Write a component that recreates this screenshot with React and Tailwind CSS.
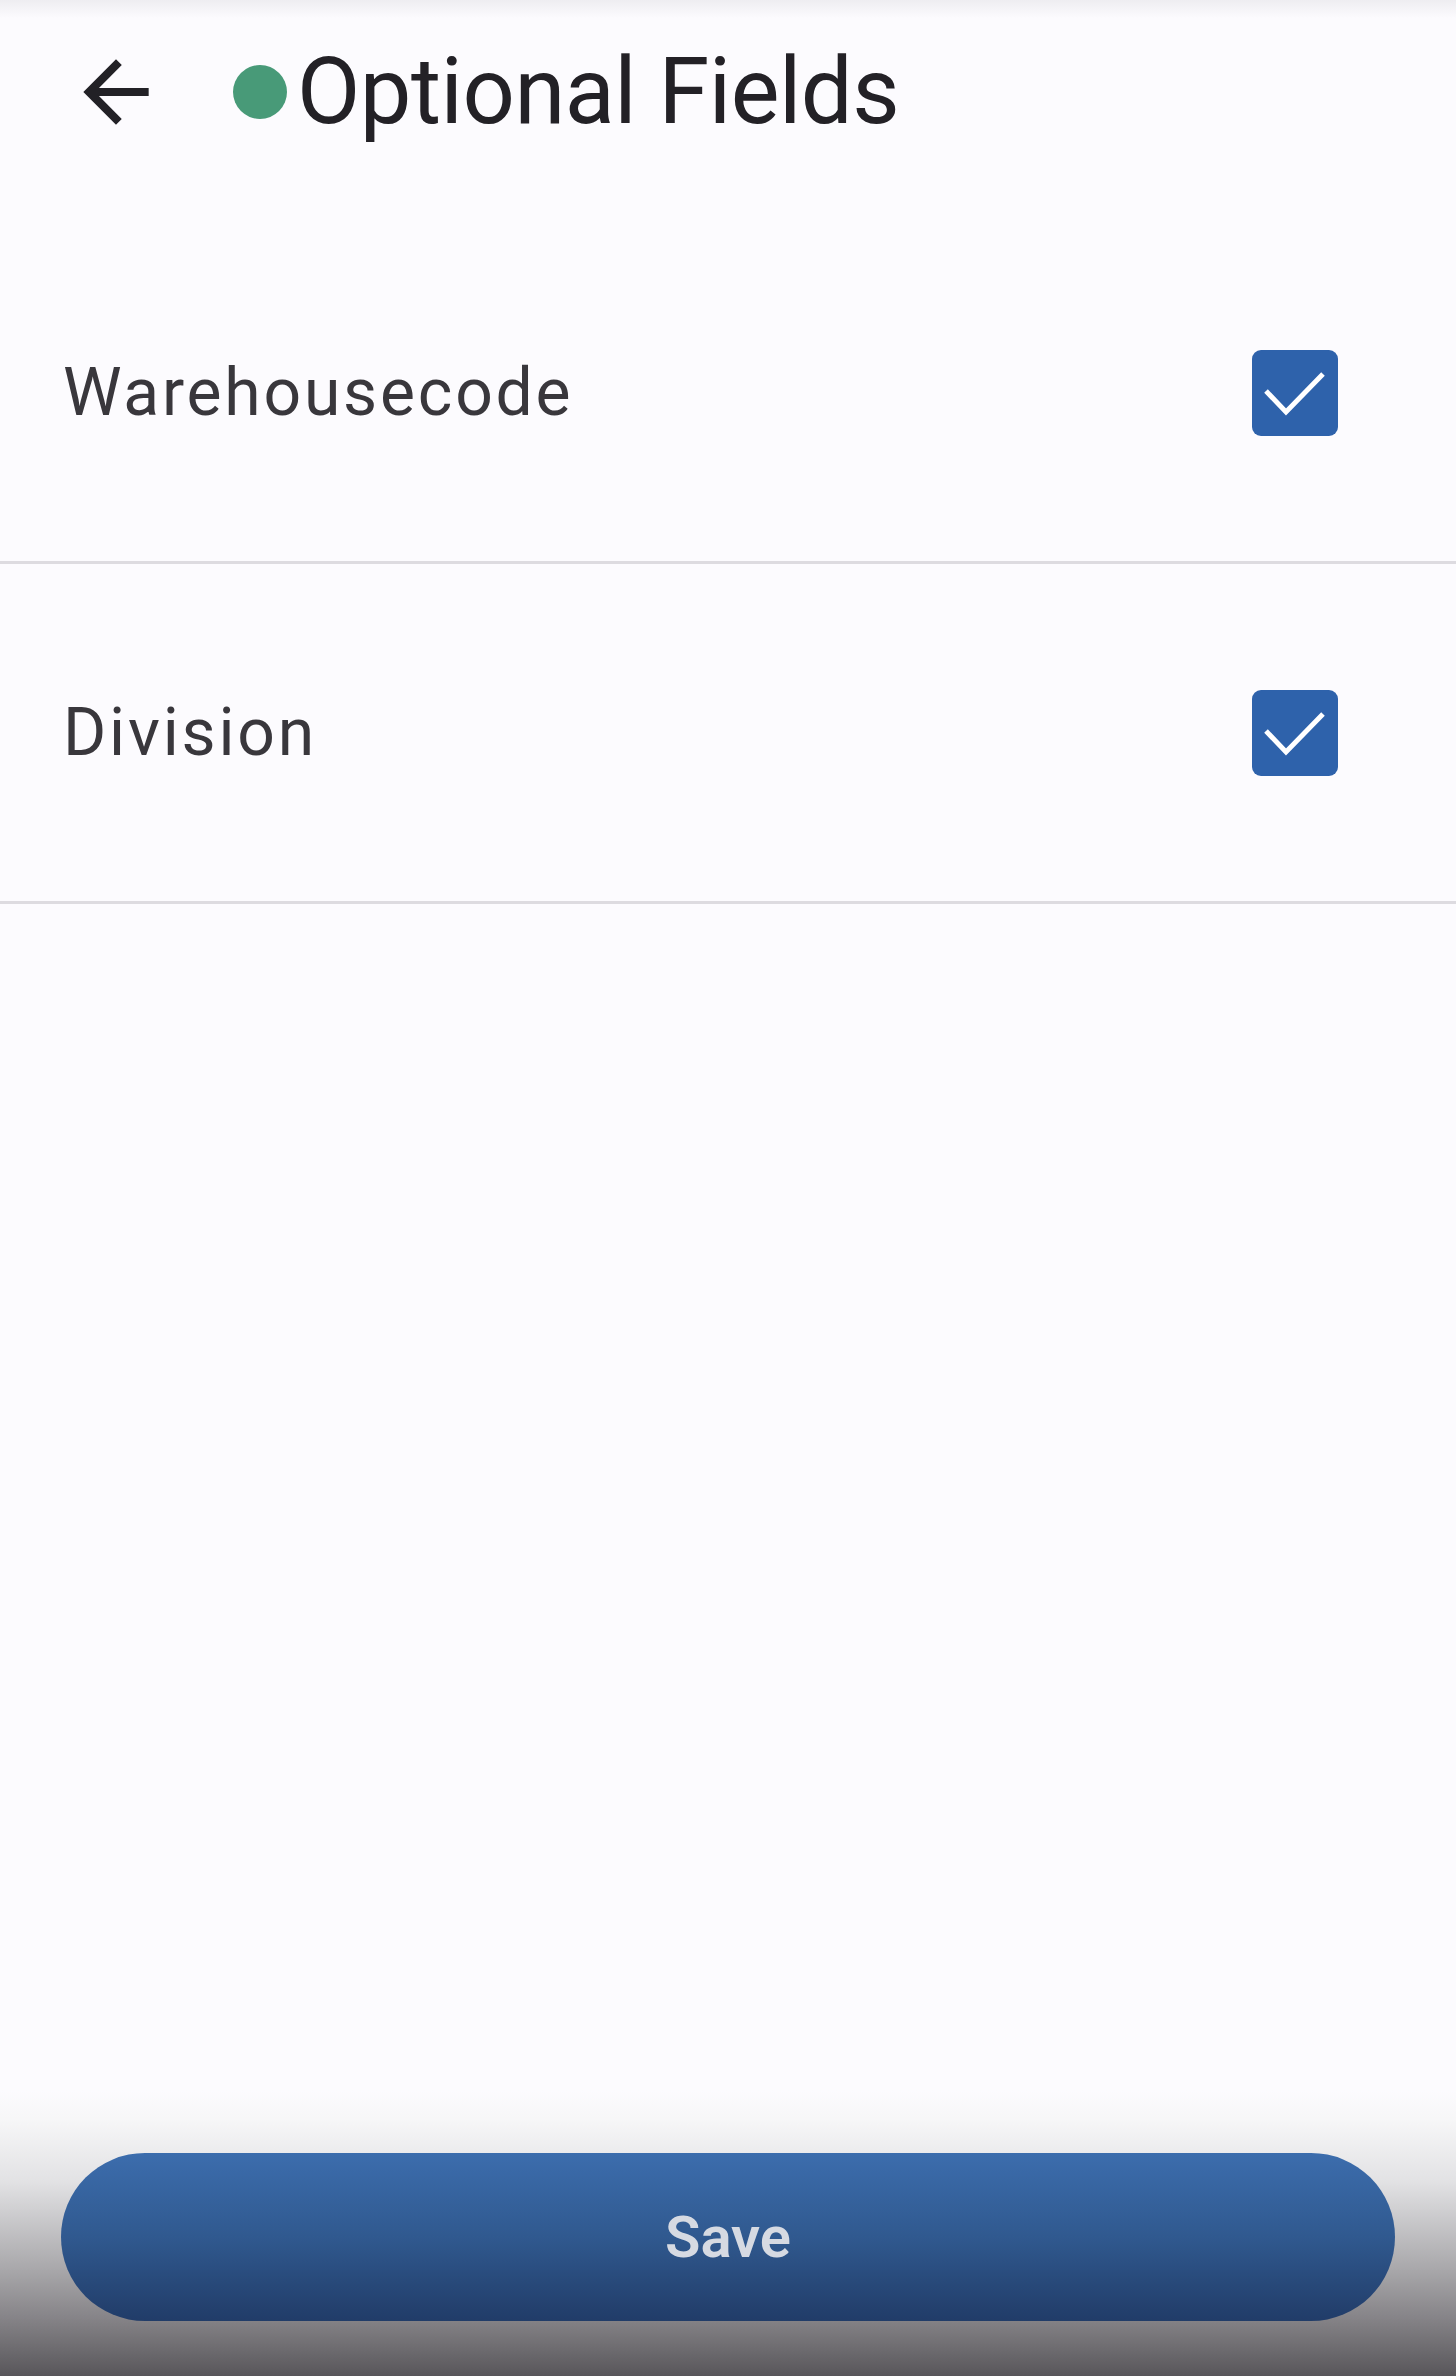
const fields = ['Warehousecode', 'Division'];

const CheckBox = () => (
    <svg width="86" height="86" viewBox="0 0 86 86" className="shrink-0">
        <rect x="0" y="0" width="86" height="86" rx="9" fill="#2e62ab" />
        <polyline points="14,41 34,62 71,24" fill="none" stroke="#ffffff" strokeWidth="5" />
    </svg>
);

const App = () => {
    return (
        <div className="min-h-[2376px] h-[2376px] w-full flex flex-col bg-[#fcfbfe] font-['Roboto',sans-serif] text-[#232126]">
            {/* Header */}
            <div className="h-[184px] flex items-center pl-[67px] bg-[linear-gradient(to_bottom,#eeedf1_0px,#fcfbfe_18px)]">
                <svg width="98" height="98" viewBox="0 0 24 24" className="shrink-0" fill="#222126">
                    <path d="M20 11H7.83l5.59-5.59L12 4l-8 8 8 8 1.41-1.41L7.83 13H20v-2z" />
                </svg>
                <span className="ml-[68px] w-[54px] h-[54px] rounded-full bg-[#489a78] shrink-0" />
                <h1 className="ml-[10px] text-[92px] leading-none font-normal tracking-[-0.5px]">Optional Fields</h1>
            </div>

            {/* Field list */}
            <div className="mt-[40px] flex flex-col">
                {fields.map((name) => (
                    <div
                        key={name}
                        className="h-[340px] flex items-center justify-between pl-[63px] pr-[118px] border-b-[3px] border-[#dddbe0]"
                    >
                        <span className="text-[66px] leading-none tracking-[2.8px] text-[#39373c]">{name}</span>
                        <CheckBox />
                    </div>
                ))}
            </div>

            <div className="flex-1" />

            {/* Footer */}
            <div className="h-[286px] pt-[63px] pb-[55px] px-[61px] bg-[linear-gradient(to_bottom,#fcfbfe_0%,#f7f7f8_10%,#e2e2e4_32%,#a6a5a8_64%,#858387_80%,#58565a_100%)]">
                <button className="w-full h-[168px] rounded-full bg-[linear-gradient(to_bottom,#3c6dad_0%,#30598f_50%,#213c68_100%)] flex items-center justify-center">
                    <span className="text-[58px] leading-none font-semibold text-[#d6dae2]">Save</span>
                </button>
            </div>
        </div>
    );
};

export default App;
